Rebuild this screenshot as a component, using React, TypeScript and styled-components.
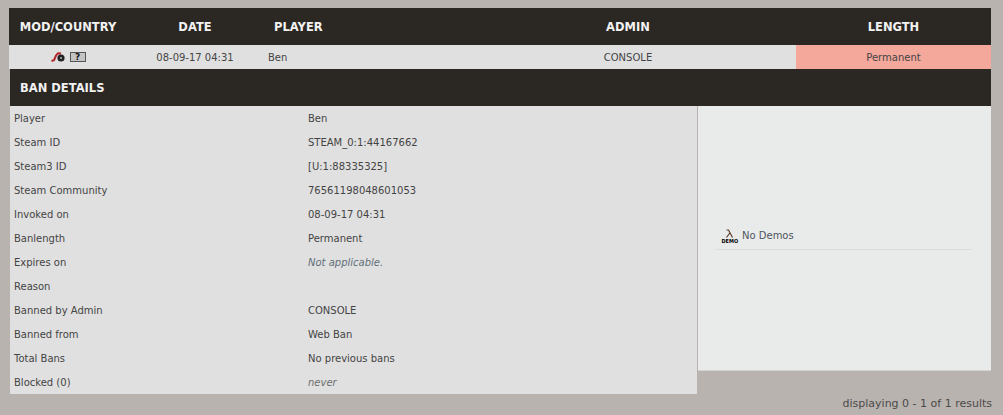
import React from "react";
import styled, { createGlobalStyle } from "styled-components";

const details: { label: string; value: string; muted?: "slate" | "grey" }[] = [
  { label: "Player", value: "Ben" },
  { label: "Steam ID", value: "STEAM_0:1:44167662" },
  { label: "Steam3 ID", value: "[U:1:88335325]" },
  { label: "Steam Community", value: "76561198048601053" },
  { label: "Invoked on", value: "08-09-17 04:31" },
  { label: "Banlength", value: "Permanent" },
  { label: "Expires on", value: "Not applicable.", muted: "slate" },
  { label: "Reason", value: "" },
  { label: "Banned by Admin", value: "CONSOLE" },
  { label: "Banned from", value: "Web Ban" },
  { label: "Total Bans", value: "No previous bans" },
  { label: "Blocked (0)", value: "never", muted: "grey" },
];

const GlobalStyle = createGlobalStyle`
  html, body {
    margin: 0;
    height: 415px;
    overflow: hidden;
    background: #b9b3af;
  }
  body {
    font-family: "DejaVu Sans", Verdana, sans-serif;
    font-size: 10px;
    color: #444;
  }
`;

const Page = styled.div`
  padding: 8px 12px 0 9px;
`;

const columns = "118px 136px 197px 336px 195px";

const HeaderRow = styled.div`
  display: grid;
  grid-template-columns: ${columns};
  height: 37px;
  background: #2b2723;
  align-items: center;
`;

const HeaderCell = styled.div<{ $indent?: boolean }>`
  color: #f2f2f2;
  font-size: 11.5px;
  font-weight: bold;
  text-align: ${(p) => (p.$indent ? "left" : "center")};
  padding-left: ${(p) => (p.$indent ? "11px" : "0")};
`;

const BanRow = styled.div`
  display: grid;
  grid-template-columns: ${columns};
  height: 24px;
  background: #e0e0e0;
  align-items: stretch;
`;

const BanCell = styled.div<{ $left?: boolean; $danger?: boolean }>`
  display: flex;
  align-items: center;
  justify-content: ${(p) => (p.$left ? "flex-start" : "center")};
  gap: 5px;
  padding-left: ${(p) => (p.$left ? "5px" : "0")};
  background: ${(p) => (p.$danger ? "#f4a79b" : "transparent")};
`;

const FlagBox = styled.span`
  display: inline-flex;
  align-items: center;
  justify-content: center;
  width: 14px;
  height: 8px;
  border: 1px solid #555;
  background: #c4c4c4;
  color: #111;
  font-size: 9px;
  font-weight: bold;
  line-height: 1;
`;

const Details = styled.div`
  margin-left: 1px;
`;

const DetailsTitle = styled.div`
  height: 37px;
  display: flex;
  align-items: center;
  padding-left: 10px;
  background: #2b2723;
  color: #f2f2f2;
  font-size: 11.5px;
  font-weight: bold;
`;

const DetailsBody = styled.div`
  display: flex;
  align-items: flex-start;
`;

const InfoTable = styled.div`
  width: 687px;
  background: #e0e0e0;
`;

const InfoRow = styled.div`
  display: grid;
  grid-template-columns: 294px 1fr;
  height: 24px;
  align-items: center;
  padding-left: 4px;
`;

const InfoValue = styled.span<{ $muted?: "slate" | "grey" }>`
  font-style: ${(p) => (p.$muted ? "italic" : "normal")};
  color: ${(p) =>
    p.$muted === "slate" ? "#62707a" : p.$muted === "grey" ? "#6e6e6e" : "#444"};
`;

const DemoPanel = styled.div`
  flex: 0 0 293px;
  height: 265px;
  margin-left: 1px;
  border-bottom: 1px solid #d2d4d3;
  background: #e9ebea;
  padding: 119px 19px 0 17px;
  box-sizing: border-box;
`;

const DemoRow = styled.div`
  display: flex;
  align-items: center;
  gap: 3px;
  height: 20px;
  padding: 0 0 4px 6px;
  border-bottom: 1px solid #dcdedd;
  color: #4f5560;
`;

const Footer = styled.div`
  margin: 3px -1px 0 0;
  text-align: right;
  font-size: 11px;
  line-height: 13px;
  color: #4a4a4a;
`;

const ModIcon = () => (
  <svg width="14" height="10" viewBox="0 0 14 10">
    <path d="M0.5 9 L3 8.2 L5 3.5 L7 1.2 L10 1.5" fill="none" stroke="#b3262a" strokeWidth="2" />
    <circle cx="10" cy="6" r="3.6" fill="#222" />
    <circle cx="10" cy="6" r="1.1" fill="#b0b0b0" />
  </svg>
);

const DemoIcon = () => (
  <svg width="18" height="20" viewBox="0 0 18 20">
    <path d="M5.5 5 H7.5 L11.5 12.5 M8.8 8 L5.5 12.5" fill="none" stroke="#5a3d28" strokeWidth="1.2" />
    <text x="0.5" y="17.5" fontFamily="'DejaVu Sans Condensed', 'DejaVu Sans', sans-serif" fontSize="5.5" fontWeight="bold" fill="#000">
      DEMO
    </text>
  </svg>
);

export default function App() {
  return (
    <Page>
      <GlobalStyle />
      <HeaderRow>
        <HeaderCell>MOD/COUNTRY</HeaderCell>
        <HeaderCell>DATE</HeaderCell>
        <HeaderCell $indent>PLAYER</HeaderCell>
        <HeaderCell>ADMIN</HeaderCell>
        <HeaderCell>LENGTH</HeaderCell>
      </HeaderRow>
      <BanRow>
        <BanCell>
          <ModIcon />
          <FlagBox>?</FlagBox>
        </BanCell>
        <BanCell>08-09-17 04:31</BanCell>
        <BanCell $left>Ben</BanCell>
        <BanCell>CONSOLE</BanCell>
        <BanCell $danger>Permanent</BanCell>
      </BanRow>
      <Details>
        <DetailsTitle>BAN DETAILS</DetailsTitle>
        <DetailsBody>
          <InfoTable>
            {details.map((d) => (
              <InfoRow key={d.label}>
                <span>{d.label}</span>
                <InfoValue $muted={d.muted}>{d.value}</InfoValue>
              </InfoRow>
            ))}
          </InfoTable>
          <DemoPanel>
            <DemoRow>
              <DemoIcon />
              No Demos
            </DemoRow>
          </DemoPanel>
        </DetailsBody>
      </Details>
      <Footer>displaying 0 - 1 of 1 results</Footer>
    </Page>
  );
}
